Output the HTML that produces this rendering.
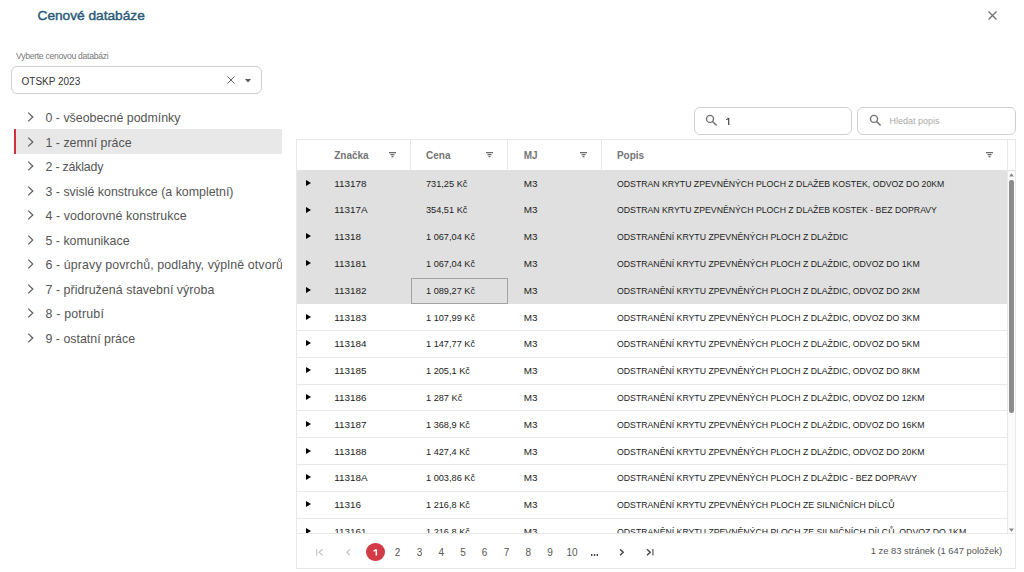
<!DOCTYPE html>
<html><head><meta charset="utf-8">
<style>
*{box-sizing:border-box;margin:0;padding:0}
html,body{width:1024px;height:572px;overflow:hidden;background:#fff;font-family:"Liberation Sans",sans-serif;position:relative}
.abs{position:absolute}
#title{left:37.5px;top:6px;font-size:13.7px;letter-spacing:0;font-weight:normal;-webkit-text-stroke:0.45px #2b5b79;color:#2b5b79;white-space:nowrap;line-height:20px}
#close{left:988px;top:11px;width:9px;height:9px}
#lbl{left:16px;top:51px;font-size:8.6px;letter-spacing:-0.28px;color:#777;line-height:10px;white-space:nowrap}
#sel{left:11px;top:66px;width:251px;height:27.5px;border:1px solid #cfcfcf;border-radius:6px}
#selv{left:21.5px;top:74.5px;font-size:10px;color:#333;line-height:13px;white-space:nowrap}
.tree{left:14px;top:104.8px;width:268px}
.tr{position:relative;height:24.5px;line-height:24.5px;font-size:12.4px;color:#555;white-space:nowrap;overflow:hidden}
.tr.sel{background:#e8e8e8;border-left:2px solid #d32f3c}
.tr svg{position:absolute;left:12.5px;top:7.5px}
.tr span{position:absolute;left:31.5px;top:1.5px}
.sb{top:107px;height:27.5px;border:1px solid #d0d0d0;border-radius:6px}
#grid{left:296px;top:139px;width:720px;height:430px;border:1px solid #e8e8e8;overflow:hidden}
.hd{position:absolute;left:0;top:0;width:718px;height:30.5px;border-bottom:1px solid #e0e0e0}
.hc{position:absolute;top:1px;height:29px;font-size:10px;font-weight:bold;color:#757575;line-height:29px;white-space:nowrap}
.fi{position:absolute;top:12px}
.vl{position:absolute;top:0;width:1px;height:30.5px;background:#e8e8e8}
.vp{position:absolute;left:0;top:30.5px;width:710px;height:362.5px;overflow:hidden}
.row{position:absolute;left:0;width:710px;height:26.785px;border-bottom:1px solid #e8e8e8;font-size:9.9px;color:#222}
.row.g{background:#e0e0e0;border-bottom-color:#e0e0e0}
.row div{position:absolute;top:0.3px;line-height:26px;white-space:nowrap}
.row u{text-decoration:none;display:inline-block;transform:scaleX(0.93);transform-origin:0 50%}
.tri{position:absolute;left:9.2px;top:9.4px;width:0;height:0;border-left:5.6px solid #000;border-top:3.8px solid transparent;border-bottom:3.8px solid transparent}
.row b{font-weight:normal;display:inline-block;transform:scaleX(0.883);transform-origin:0 50%}
.focus{position:absolute;border:1px solid #a3a3a3}
.track{position:absolute;left:710px;top:30.5px;width:8px;height:362.5px;border-left:1px solid #e8e8e8;background:#fbfbfb}
.arr{position:absolute;left:1.4px}
.thumb{position:absolute;left:1.4px;top:9px;width:4.5px;height:233.2px;background:#8c8c8c;border-radius:2.25px}
.pg{position:absolute;left:0;top:393px;width:718px;height:35px;border-top:1px solid #e8e8e8}
.pi{position:absolute}
.cur{position:absolute;margin-top:-1px;width:18.5px;height:18.5px;border-radius:50%;background:#d23b45;color:#fff;font-size:10px;font-weight:bold;text-align:center;line-height:18.5px}
.pn{position:absolute;top:1.6px;width:20px;height:34px;line-height:34px;text-align:center;font-size:10px;color:#555}
.pinfo{position:absolute;right:13px;top:0;height:34px;line-height:34px;font-size:9.4px;color:#555;white-space:nowrap}
</style></head><body>
<div id="title" class="abs">Cenové databáze</div>
<svg id="close" class="abs" viewBox="0 0 9 9"><path d="M0.5 0.5L8.5 8.5M8.5 0.5L0.5 8.5" stroke="#6e6e6e" stroke-width="1.2"/></svg>
<div id="lbl" class="abs">Vyberte cenovou databázi</div>
<div id="sel" class="abs"></div>
<div id="selv" class="abs">OTSKP 2023</div>
<svg class="abs" style="left:226.6px;top:76.3px" width="8" height="8" viewBox="0 0 8 8"><path d="M0.3 0.3L7.7 7.7M7.7 0.3L0.3 7.7" stroke="#666" stroke-width="1"/></svg>
<svg class="abs" style="left:245px;top:78.5px" width="6" height="4" viewBox="0 0 6 4"><path d="M0 0H6L3 3.5Z" fill="#555"/></svg>

<div class="tree abs">
<div class="tr"><svg width="7" height="10" viewBox="0 0 7 10"><path d="M1.2 0.6L5.8 5L1.2 9.4" fill="none" stroke="#606060" stroke-width="1.25"/></svg><span>0 - všeobecné podmínky</span></div>
<div class="tr sel"><svg width="7" height="10" viewBox="0 0 7 10" style="left:10.5px"><path d="M1.2 0.6L5.8 5L1.2 9.4" fill="none" stroke="#606060" stroke-width="1.25"/></svg><span style="left:29.5px">1 - zemní práce</span></div>
<div class="tr"><svg width="7" height="10" viewBox="0 0 7 10"><path d="M1.2 0.6L5.8 5L1.2 9.4" fill="none" stroke="#606060" stroke-width="1.25"/></svg><span style="letter-spacing:-0.2px">2 - základy</span></div>
<div class="tr"><svg width="7" height="10" viewBox="0 0 7 10"><path d="M1.2 0.6L5.8 5L1.2 9.4" fill="none" stroke="#606060" stroke-width="1.25"/></svg><span>3 - svislé konstrukce (a kompletní)</span></div>
<div class="tr"><svg width="7" height="10" viewBox="0 0 7 10"><path d="M1.2 0.6L5.8 5L1.2 9.4" fill="none" stroke="#606060" stroke-width="1.25"/></svg><span style="letter-spacing:0.085px">4 - vodorovné konstrukce</span></div>
<div class="tr"><svg width="7" height="10" viewBox="0 0 7 10"><path d="M1.2 0.6L5.8 5L1.2 9.4" fill="none" stroke="#606060" stroke-width="1.25"/></svg><span>5 - komunikace</span></div>
<div class="tr"><svg width="7" height="10" viewBox="0 0 7 10"><path d="M1.2 0.6L5.8 5L1.2 9.4" fill="none" stroke="#606060" stroke-width="1.25"/></svg><span style="letter-spacing:0.115px">6 - úpravy povrchů, podlahy, výplně otvorů</span></div>
<div class="tr"><svg width="7" height="10" viewBox="0 0 7 10"><path d="M1.2 0.6L5.8 5L1.2 9.4" fill="none" stroke="#606060" stroke-width="1.25"/></svg><span style="letter-spacing:0.05px">7 - přidružená stavební výroba</span></div>
<div class="tr"><svg width="7" height="10" viewBox="0 0 7 10"><path d="M1.2 0.6L5.8 5L1.2 9.4" fill="none" stroke="#606060" stroke-width="1.25"/></svg><span style="letter-spacing:0.19px">8 - potrubí</span></div>
<div class="tr"><svg width="7" height="10" viewBox="0 0 7 10"><path d="M1.2 0.6L5.8 5L1.2 9.4" fill="none" stroke="#606060" stroke-width="1.25"/></svg><span>9 - ostatní práce</span></div>
</div>

<div class="sb abs" style="left:694px;width:157.5px"></div>
<div class="sb abs" style="left:857px;width:159px"></div>

<svg class="abs" style="left:705px;top:113.5px" width="13" height="13" viewBox="0 0 13 13"><circle cx="5" cy="4.9" r="3.5" fill="none" stroke="#707070" stroke-width="1.4"/><path d="M7.5 7.4L11.6 11.6" stroke="#707070" stroke-width="1.5"/></svg>
<svg class="abs" style="left:725px;top:117px" width="6" height="9" viewBox="0 0 6 9"><path d="M3.7 1V8M3.7 1.1L1.3 2.9" fill="none" stroke="#3a3a3a" stroke-width="1.1"/></svg>
<svg class="abs" style="left:868.7px;top:113.5px" width="13" height="13" viewBox="0 0 13 13"><circle cx="5" cy="4.9" r="3.5" fill="none" stroke="#707070" stroke-width="1.4"/><path d="M7.5 7.4L11.6 11.6" stroke="#707070" stroke-width="1.5"/></svg>
<div class="abs" style="left:889.4px;top:115px;font-size:9px;line-height:13px;color:#aaa;white-space:nowrap">Hledat popis</div>
<div id="grid" class="abs">
<div class="hd">
<div class="hc" style="left:37.20px">Značka</div>
<svg class="fi" style="left:92.30px" width="7" height="6" viewBox="0 0 7 6"><path d="M0 0.6H7M1.5 2.6H5.5M2.5 4.6H4.5" stroke="#6a6a6a" stroke-width="1.1"/></svg>
<div class="hc" style="left:129.00px">Cena</div>
<svg class="fi" style="left:189.00px" width="7" height="6" viewBox="0 0 7 6"><path d="M0 0.6H7M1.5 2.6H5.5M2.5 4.6H4.5" stroke="#6a6a6a" stroke-width="1.1"/></svg>
<div class="hc" style="left:226.75px">MJ</div>
<svg class="fi" style="left:283.00px" width="7" height="6" viewBox="0 0 7 6"><path d="M0 0.6H7M1.5 2.6H5.5M2.5 4.6H4.5" stroke="#6a6a6a" stroke-width="1.1"/></svg>
<div class="hc" style="left:319.90px">Popis</div>
<svg class="fi" style="left:688.50px" width="7" height="6" viewBox="0 0 7 6"><path d="M0 0.6H7M1.5 2.6H5.5M2.5 4.6H4.5" stroke="#6a6a6a" stroke-width="1.1"/></svg>
<div class="vl" style="left:113px"></div>
<div class="vl" style="left:210px"></div>
<div class="vl" style="left:304px"></div>
<div class="vl" style="left:710px"></div>
</div>
<div class="vp">
<div class="row g" style="top:-0.14px"><i class="tri"></i><div style="left:37.2px">113178</div><div style="left:129.0px"><u>731,25 Kč</u></div><div style="left:226.8px">M3</div><div style="left:319.9px"><b>ODSTRAN KRYTU ZPEVNĚNÝCH PLOCH Z DLAŽEB KOSTEK, ODVOZ DO 20KM</b></div></div>
<div class="row g" style="top:26.64px"><i class="tri"></i><div style="left:37.2px">11317A</div><div style="left:129.0px"><u>354,51 Kč</u></div><div style="left:226.8px">M3</div><div style="left:319.9px"><b>ODSTRAN KRYTU ZPEVNĚNÝCH PLOCH Z DLAŽEB KOSTEK - BEZ DOPRAVY</b></div></div>
<div class="row g" style="top:53.43px"><i class="tri"></i><div style="left:37.2px">11318</div><div style="left:129.0px"><u>1 067,04 Kč</u></div><div style="left:226.8px">M3</div><div style="left:319.9px"><b>ODSTRANĚNÍ KRYTU ZPEVNĚNÝCH PLOCH Z DLAŽDIC</b></div></div>
<div class="row g" style="top:80.22px"><i class="tri"></i><div style="left:37.2px">113181</div><div style="left:129.0px"><u>1 067,04 Kč</u></div><div style="left:226.8px">M3</div><div style="left:319.9px"><b>ODSTRANĚNÍ KRYTU ZPEVNĚNÝCH PLOCH Z DLAŽDIC, ODVOZ DO 1KM</b></div></div>
<div class="row g" style="top:107.00px"><i class="tri"></i><div style="left:37.2px">113182</div><div style="left:129.0px"><u>1 089,27 Kč</u></div><div style="left:226.8px">M3</div><div style="left:319.9px"><b>ODSTRANĚNÍ KRYTU ZPEVNĚNÝCH PLOCH Z DLAŽDIC, ODVOZ DO 2KM</b></div></div>
<div class="row" style="top:133.79px"><i class="tri"></i><div style="left:37.2px">113183</div><div style="left:129.0px"><u>1 107,99 Kč</u></div><div style="left:226.8px">M3</div><div style="left:319.9px"><b>ODSTRANĚNÍ KRYTU ZPEVNĚNÝCH PLOCH Z DLAŽDIC, ODVOZ DO 3KM</b></div></div>
<div class="row" style="top:160.57px"><i class="tri"></i><div style="left:37.2px">113184</div><div style="left:129.0px"><u>1 147,77 Kč</u></div><div style="left:226.8px">M3</div><div style="left:319.9px"><b>ODSTRANĚNÍ KRYTU ZPEVNĚNÝCH PLOCH Z DLAŽDIC, ODVOZ DO 5KM</b></div></div>
<div class="row" style="top:187.36px"><i class="tri"></i><div style="left:37.2px">113185</div><div style="left:129.0px"><u>1 205,1 Kč</u></div><div style="left:226.8px">M3</div><div style="left:319.9px"><b>ODSTRANĚNÍ KRYTU ZPEVNĚNÝCH PLOCH Z DLAŽDIC, ODVOZ DO 8KM</b></div></div>
<div class="row" style="top:214.14px"><i class="tri"></i><div style="left:37.2px">113186</div><div style="left:129.0px"><u>1 287 Kč</u></div><div style="left:226.8px">M3</div><div style="left:319.9px"><b>ODSTRANĚNÍ KRYTU ZPEVNĚNÝCH PLOCH Z DLAŽDIC, ODVOZ DO 12KM</b></div></div>
<div class="row" style="top:240.93px"><i class="tri"></i><div style="left:37.2px">113187</div><div style="left:129.0px"><u>1 368,9 Kč</u></div><div style="left:226.8px">M3</div><div style="left:319.9px"><b>ODSTRANĚNÍ KRYTU ZPEVNĚNÝCH PLOCH Z DLAŽDIC, ODVOZ DO 16KM</b></div></div>
<div class="row" style="top:267.71px"><i class="tri"></i><div style="left:37.2px">113188</div><div style="left:129.0px"><u>1 427,4 Kč</u></div><div style="left:226.8px">M3</div><div style="left:319.9px"><b>ODSTRANĚNÍ KRYTU ZPEVNĚNÝCH PLOCH Z DLAŽDIC, ODVOZ DO 20KM</b></div></div>
<div class="row" style="top:294.50px"><i class="tri"></i><div style="left:37.2px">11318A</div><div style="left:129.0px"><u>1 003,86 Kč</u></div><div style="left:226.8px">M3</div><div style="left:319.9px"><b>ODSTRANĚNÍ KRYTU ZPEVNĚNÝCH PLOCH Z DLAŽDIC - BEZ DOPRAVY</b></div></div>
<div class="row" style="top:321.28px"><i class="tri"></i><div style="left:37.2px">11316</div><div style="left:129.0px"><u>1 216,8 Kč</u></div><div style="left:226.8px">M3</div><div style="left:319.9px"><b>ODSTRANĚNÍ KRYTU ZPEVNĚNÝCH PLOCH ZE SILNIČNÍCH DÍLCŮ</b></div></div>
<div class="row" style="top:348.06px"><i class="tri"></i><div style="left:37.2px">113161</div><div style="left:129.0px"><u>1 216,8 Kč</u></div><div style="left:226.8px">M3</div><div style="left:319.9px"><b>ODSTRANĚNÍ KRYTU ZPEVNĚNÝCH PLOCH ZE SILNIČNÍCH DÍLCŮ, ODVOZ DO 1KM</b></div></div>
<div class="focus" style="left:114.3px;top:107.00px;width:96.5px;height:26.3px"></div>
</div>
<div class="track"><svg class="arr" style="top:2.4px" width="5" height="4" viewBox="0 0 5 4"><path d="M0 3.5L2.5 0.3L5 3.5Z" fill="#8a8a8a"/></svg><div class="thumb"></div><svg class="arr" style="top:357.5px" width="5" height="4" viewBox="0 0 5 4"><path d="M0 0.5L2.5 3.7L5 0.5Z" fill="#8a8a8a"/></svg></div>
<div class="pg">
<svg class="pi" style="left:19px;top:15.0px" width="8" height="7" viewBox="0 0 8 7"><path d="M0.7 0V6.5M6.5 0.3L3 3.25L6.5 6.2" fill="none" stroke="#c4c4c4" stroke-width="1.2"/></svg>
<svg class="pi" style="left:49px;top:15.0px" width="5" height="7" viewBox="0 0 5 7"><path d="M4 0.3L0.8 3.25L4 6.2" fill="none" stroke="#c4c4c4" stroke-width="1.2"/></svg>
<div class="cur" style="left:69.25px;top:9.75px"><svg style="position:absolute;left:0;top:0" width="19" height="19" viewBox="0 0 19 19"><path d="M10.3 6.5V12.6M10.4 6.6L7.6 8.2" fill="none" stroke="#fff" stroke-width="1.5"/></svg></div>
<div class="pn" style="left:90.5px">2</div>
<div class="pn" style="left:112.5px">3</div>
<div class="pn" style="left:134.2px">4</div>
<div class="pn" style="left:156.0px">5</div>
<div class="pn" style="left:177.6px">6</div>
<div class="pn" style="left:199.5px">7</div>
<div class="pn" style="left:221.2px">8</div>
<div class="pn" style="left:243.0px">9</div>
<div class="pn" style="left:265.0px">10</div>
<svg class="pi" style="left:293px;top:19.6px" width="9" height="2" viewBox="0 0 9 2"><path d="M1 1H2.4M3.8 1H5.2M6.6 1H8" stroke="#444" stroke-width="2"/></svg>
<svg class="pi" style="left:321.7px;top:15.0px" width="5" height="7" viewBox="0 0 5 7"><path d="M1 0.3L4.2 3.25L1 6.2" fill="none" stroke="#444" stroke-width="1.4"/></svg>
<svg class="pi" style="left:348.7px;top:15.0px" width="8" height="7" viewBox="0 0 8 7"><path d="M1 0.3L4.2 3.25L1 6.2" fill="none" stroke="#444" stroke-width="1.4"/><path d="M6.9 0V6.5" stroke="#555" stroke-width="1.2"/></svg>
<div class="pinfo">1 ze 83 stránek (1 647 položek)</div>
</div>
</div>
</body></html>
